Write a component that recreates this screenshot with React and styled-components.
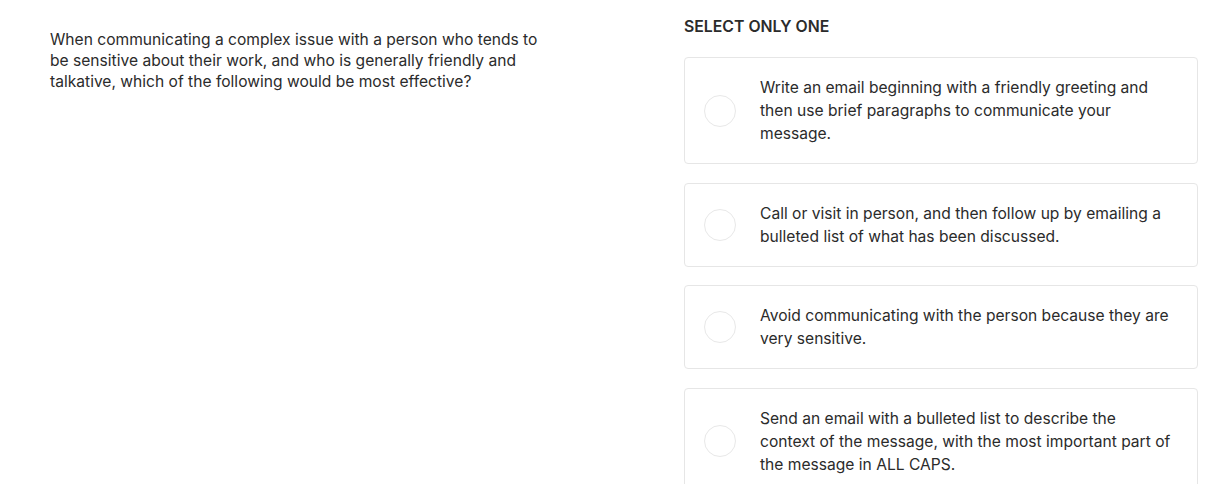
import styled, { createGlobalStyle } from 'styled-components'

const options = [
  'Write an email beginning with a friendly greeting and then use brief paragraphs to communicate your message.',
  'Call or visit in person, and then follow up by emailing a bulleted list of what has been discussed.',
  'Avoid communicating with the person because they are very sensitive.',
  'Send an email with a bulleted list to describe the context of the message, with the most important part of the message in ALL CAPS.',
]

const App = () => {
  return (
    <>
      <GlobalStyle />
      <Page>
        <Question>
          When communicating a complex issue with a person who tends to be sensitive about their
          work, and who is generally friendly and talkative, which of the following would be most
          effective?
        </Question>
        <Answers>
          <Label>SELECT ONLY ONE</Label>
          <OptionList>
            {options.map((text) => (
              <Option key={text}>
                <Radio />
                <OptionText>{text}</OptionText>
              </Option>
            ))}
          </OptionList>
        </Answers>
      </Page>
    </>
  )
}

const GlobalStyle = createGlobalStyle`
  body {
    margin: 0;
    background: #ffffff;
    font-family: Inter, "Liberation Sans", sans-serif;
    color: #2b2b2b;
  }
`

const Page = styled.div`
  display: grid;
  grid-template-columns: 510px 514px;
  column-gap: 124px;
  padding: 17px 0 0 50px;
`

const Question = styled.p`
  margin: 13px 0 0;
  font-size: 15.6px;
  line-height: 20.8px;
`

const Answers = styled.div`
  display: flex;
  flex-direction: column;
`

const Label = styled.div`
  font-size: 15.8px;
  font-weight: 600;
  line-height: 20px;
  margin-bottom: 20px;
`

const OptionList = styled.div`
  display: flex;
  flex-direction: column;
  gap: 18.5px;
`

const Option = styled.div`
  display: flex;
  align-items: center;
  gap: 24px;
  padding: 18px 19px;
  border: 1px solid #e6e6e6;
  border-radius: 4px;
  background: #fff;
`

const Radio = styled.span`
  flex: none;
  width: 30px;
  height: 30px;
  border-radius: 50%;
  border: 1px solid #e8e8e8;
`

const OptionText = styled.div`
  flex: 1;
  max-width: 413px;
  font-size: 15.6px;
  line-height: 23px;
`

export default App
